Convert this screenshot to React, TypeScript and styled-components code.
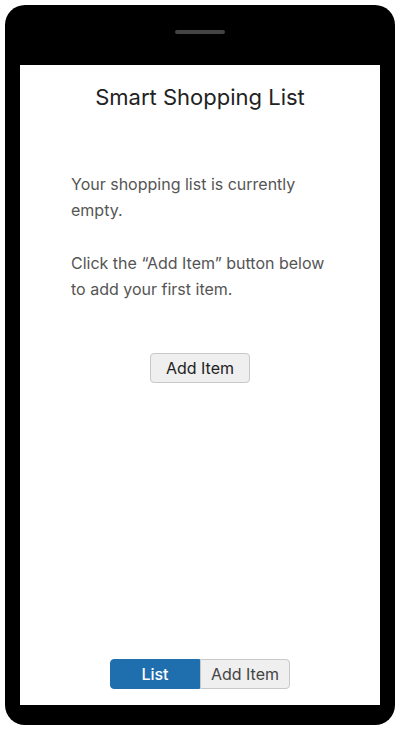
import React from "react";
import styled, { createGlobalStyle } from "styled-components";

const Global = createGlobalStyle`
  html, body { margin: 0; padding: 0; background: #fff; }
  body { font-family: Inter, "Liberation Sans", sans-serif; }
  * { box-sizing: border-box; }
`;

const Page = styled.div`
  width: 400px;
  height: 730px;
  padding: 5px;
`;

const Phone = styled.div`
  width: 390px;
  height: 720px;
  background: #000;
  border-radius: 20px;
  padding: 0 15px 20px;
  display: flex;
  flex-direction: column;
`;

const Bezel = styled.div`
  height: 60px;
  display: flex;
  justify-content: center;
  padding-top: 25px;
`;

const Speaker = styled.div`
  width: 50px;
  height: 4px;
  border-radius: 2px;
  background: #444;
`;

const Screen = styled.div`
  flex: 1;
  background: #fff;
  display: flex;
  flex-direction: column;
  align-items: center;
  padding: 18px 0 16px;
`;

const Title = styled.h1`
  margin: 0;
  font-size: 22px;
  font-weight: 400;
  color: #222;
  line-height: 28px;
`;

const Body = styled.div`
  width: 258px;
  margin-top: 60px;
  color: #555;
  font-size: 16px;
  line-height: 26px;
`;

const Para = styled.p`
  margin: 0 0 27px;
`;

const Button = styled.button`
  font-family: inherit;
  font-size: 16px;
  color: #222;
  background: #efefef;
  border: 1px solid #c8c8c8;
  border-radius: 4px;
  height: 30px;
  width: 100px;
  padding: 0;
  margin-top: 24px;
`;

const Spacer = styled.div`
  flex: 1;
`;

const Tabs = styled.div`
  display: flex;
`;

const Tab = styled.button<{ $active?: boolean }>`
  font-family: inherit;
  font-size: 16px;
  width: 90px;
  height: 30px;
  padding: 0;
  border: 1px solid ${(p) => (p.$active ? "#1f6fae" : "#c8c8c8")};
  background: ${(p) => (p.$active ? "#1f6fae" : "#efefef")};
  color: ${(p) => (p.$active ? "#fff" : "#444")};
  border-radius: ${(p) => (p.$active ? "4px 0 0 4px" : "0 4px 4px 0")};
  ${(p) => (p.$active ? "font-weight: 500;" : "")}
`;

export default function App() {
  return (
    <Page>
      <Global />
      <Phone>
        <Bezel>
          <Speaker />
        </Bezel>
        <Screen>
          <Title>Smart Shopping List</Title>
          <Body>
            <Para>Your shopping list is currently empty.</Para>
            <Para>Click the “Add Item” button below to add your first item.</Para>
          </Body>
          <Button>Add Item</Button>
          <Spacer />
          <Tabs>
            <Tab $active>List</Tab>
            <Tab>Add Item</Tab>
          </Tabs>
        </Screen>
      </Phone>
    </Page>
  );
}
